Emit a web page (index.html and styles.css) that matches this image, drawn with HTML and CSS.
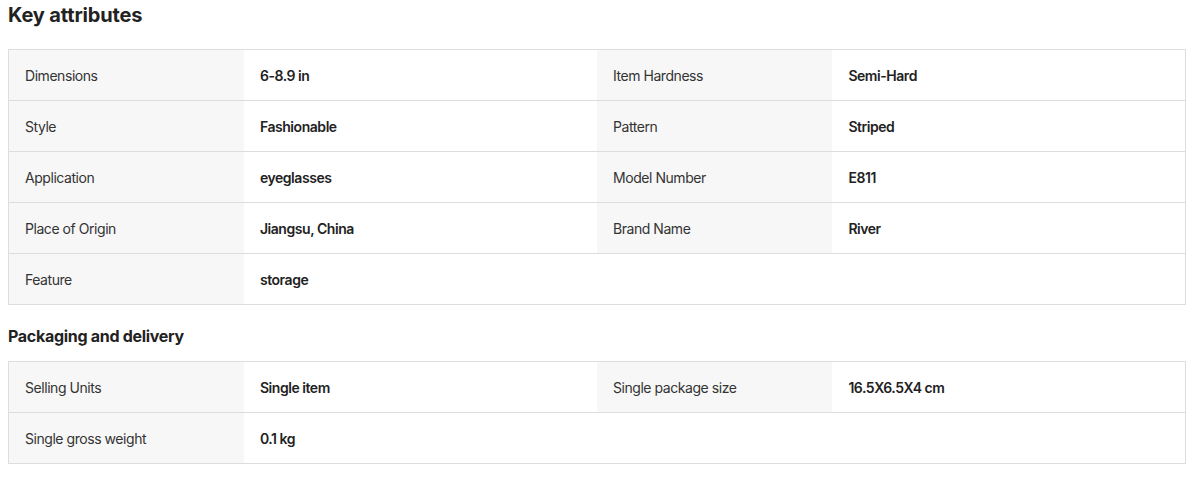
FILE: index.html
```html
<!DOCTYPE html>
<html>
<head>
<meta charset="utf-8">
<link rel="stylesheet" href="styles.css">
</head>
<body>
<div class="page">
  <h2 class="title">Key attributes</h2>
  <table class="attrs">
    <colgroup><col class="c-l"><col class="c-v"><col class="c-l"><col class="c-v"></colgroup>
    <tr><td class="lbl">Dimensions</td><td class="val">6-8.9 in</td><td class="lbl">Item Hardness</td><td class="val">Semi-Hard</td></tr>
    <tr><td class="lbl">Style</td><td class="val">Fashionable</td><td class="lbl">Pattern</td><td class="val">Striped</td></tr>
    <tr><td class="lbl">Application</td><td class="val">eyeglasses</td><td class="lbl">Model Number</td><td class="val">E811</td></tr>
    <tr><td class="lbl">Place of Origin</td><td class="val">Jiangsu, China</td><td class="lbl">Brand Name</td><td class="val">River</td></tr>
    <tr><td class="lbl">Feature</td><td class="val">storage</td><td class="empty"></td><td class="empty"></td></tr>
  </table>
  <h3 class="subtitle">Packaging and delivery</h3>
  <table class="attrs">
    <colgroup><col class="c-l"><col class="c-v"><col class="c-l"><col class="c-v"></colgroup>
    <tr><td class="lbl">Selling Units</td><td class="val">Single item</td><td class="lbl">Single package size</td><td class="val">16.5X6.5X4 cm</td></tr>
    <tr><td class="lbl">Single gross weight</td><td class="val">0.1 kg</td><td class="empty"></td><td class="empty"></td></tr>
  </table>
</div>
</body>
</html>
```
FILE: styles.css
```css
html, body {
  margin: 0;
  padding: 0;
  background: #fff;
}
body {
  font-family: Inter, "Noto Sans", "Liberation Sans", sans-serif;
  color: #222;
}
.page {
  width: 1178px;
  padding: 0 8px;
}
.title {
  margin: 0;
  padding-top: 1px;
  font-size: 20px;
  line-height: 28px;
  font-weight: 700;
  letter-spacing: -0.15px;
  color: #222;
  margin-bottom: 20px;
}
.subtitle {
  margin: 0;
  font-size: 16px;
  line-height: 22px;
  font-weight: 700;
  letter-spacing: -0.3px;
  color: #222;
  padding: 20px 0 14px;
}
.attrs {
  width: 100%;
  table-layout: fixed;
  border-collapse: collapse;
  border: 1px solid #ddd;
  font-size: 14px;
  letter-spacing: -0.45px;
}
.c-l { width: 20%; }
.c-v { width: 30%; }
.attrs td {
  height: 49px;
  padding: 1px 16px 0;
  border-top: 1px solid #ddd;
  vertical-align: middle;
}
.lbl {
  background: #f7f7f7;
  color: #333;
  font-weight: 400;
}
.val {
  background: #fff;
  color: #222;
  font-weight: 600;
}
.empty {
  background: #fff;
}
```
